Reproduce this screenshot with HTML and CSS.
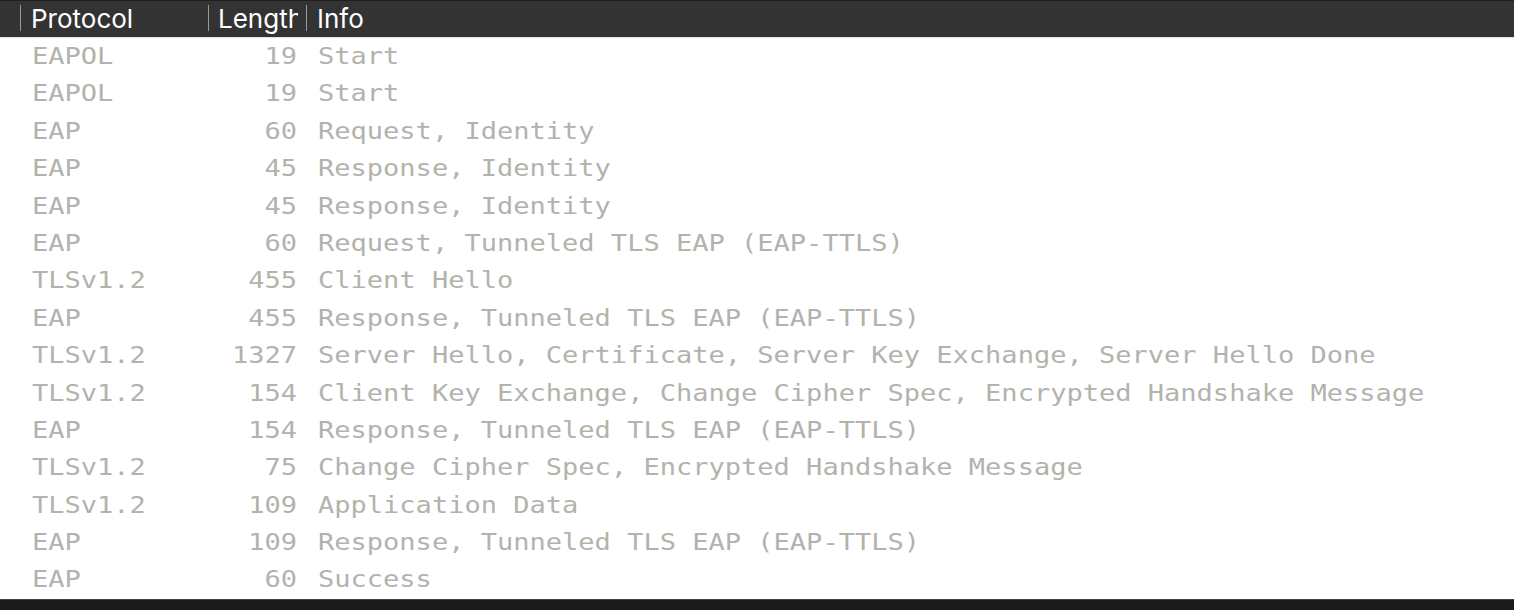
FILE: index.html
```html
<!DOCTYPE html>
<html>
<head>
<meta charset="utf-8">
<link rel="stylesheet" href="styles.css">
</head>
<body>
<div class="view">
  <div class="header">
    <div class="hcell h-proto"><span class="hlabel">Protocol</span></div>
    <div class="hcell h-len"><span class="hlabel">Length</span></div>
    <div class="hcell h-info"><span class="hlabel">Info</span></div>
  </div>
  <div class="rows">
    <div class="row"><span class="proto">EAPOL</span><span class="len">19</span><span class="info">Start</span></div>
    <div class="row"><span class="proto">EAPOL</span><span class="len">19</span><span class="info">Start</span></div>
    <div class="row"><span class="proto">EAP</span><span class="len">60</span><span class="info">Request, Identity</span></div>
    <div class="row"><span class="proto">EAP</span><span class="len">45</span><span class="info">Response, Identity</span></div>
    <div class="row"><span class="proto">EAP</span><span class="len">45</span><span class="info">Response, Identity</span></div>
    <div class="row"><span class="proto">EAP</span><span class="len">60</span><span class="info">Request, Tunneled TLS EAP (EAP-TTLS)</span></div>
    <div class="row"><span class="proto">TLSv1.2</span><span class="len">455</span><span class="info">Client Hello</span></div>
    <div class="row"><span class="proto">EAP</span><span class="len">455</span><span class="info">Response, Tunneled TLS EAP (EAP-TTLS)</span></div>
    <div class="row"><span class="proto">TLSv1.2</span><span class="len">1327</span><span class="info">Server Hello, Certificate, Server Key Exchange, Server Hello Done</span></div>
    <div class="row"><span class="proto">TLSv1.2</span><span class="len">154</span><span class="info">Client Key Exchange, Change Cipher Spec, Encrypted Handshake Message</span></div>
    <div class="row"><span class="proto">EAP</span><span class="len">154</span><span class="info">Response, Tunneled TLS EAP (EAP-TTLS)</span></div>
    <div class="row"><span class="proto">TLSv1.2</span><span class="len">75</span><span class="info">Change Cipher Spec, Encrypted Handshake Message</span></div>
    <div class="row"><span class="proto">TLSv1.2</span><span class="len">109</span><span class="info">Application Data</span></div>
    <div class="row"><span class="proto">EAP</span><span class="len">109</span><span class="info">Response, Tunneled TLS EAP (EAP-TTLS)</span></div>
    <div class="row"><span class="proto">EAP</span><span class="len">60</span><span class="info">Success</span></div>
  </div>
  <div class="footer"></div>
</div>
</body>
</html>
```
FILE: styles.css
```css
* { box-sizing: border-box; }
html, body { margin: 0; padding: 0; background: #ffffff; }
body { width: 1514px; height: 610px; overflow: hidden; }

.view {
  display: flex;
  flex-direction: column;
  height: 610px;
  overflow: hidden;
}

.header {
  display: flex;
  height: 38px;
  flex: none;
  background: #333333;
  border-top: 1px solid #1f1f1f;
  border-bottom: 1px solid #e4e4e4;
  padding-left: 20px;
  font-family: "Inter", "Liberation Sans", sans-serif;
  font-size: 26px;
  color: #ffffff;
  align-items: center;
}

.hcell {
  position: relative;
  height: 36px;
  line-height: 35px;
  white-space: nowrap;
  padding-left: 11px;
}
.hcell::before {
  content: "";
  position: absolute;
  left: 0;
  top: 4px;
  bottom: 6px;
  width: 1px;
  background: #9a9a9a;
}
.hlabel {
  display: block;
  overflow: hidden;
}
.h-proto { width: 188px; }
.h-len { width: 98px; padding-left: 10px; padding-right: 8px; }
.h-info { flex: 1; }

.rows {
  flex: 1;
  display: flex;
  flex-direction: column;
  overflow: hidden;
  font-family: "DejaVu Sans Mono", "Liberation Mono", monospace;
  font-size: 23px;
  color: #b2b3ac;
}

.row {
  display: grid;
  grid-template-columns: 208px 98px 1fr;
  height: 37.4px;
  line-height: 36px;
  white-space: nowrap;
  overflow: hidden;
}
.proto, .len, .info {
  transform: scaleX(1.175);
}
.proto { padding-left: 32px; transform-origin: 32px 50%; }
.len { text-align: right; padding-right: 9px; transform-origin: calc(100% - 9px) 50%; }
.info { padding-left: 12px; transform-origin: 12px 50%; }

.footer {
  height: 11px;
  flex: none;
  background: #1b1b1b;
  border-top: 1px solid #404040;
}
```
